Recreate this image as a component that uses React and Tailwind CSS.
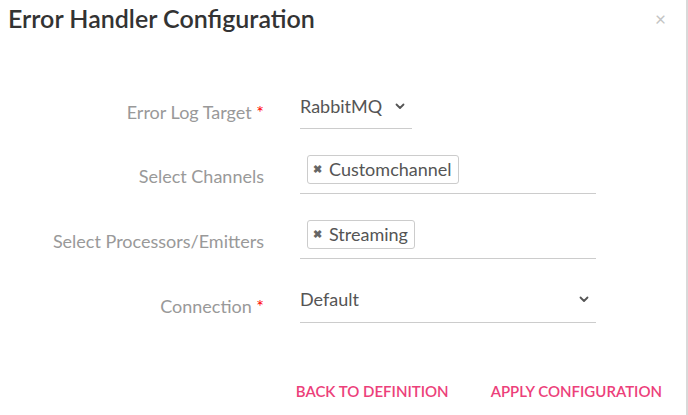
import React from "react";

const Chevron = ({ className }) => (
  <svg className={className} width="10" height="7" viewBox="0 0 10 7" fill="none">
    <path d="M1.5 1.5 L5 5 L8.5 1.5" stroke="#555" strokeWidth="1.8" strokeLinecap="round" strokeLinejoin="round" />
  </svg>
);

const Chip = ({ label }) => (
  <div className="flex h-[29px] items-center rounded-[3px] border border-[#cccccc] pl-[5px] pr-[6px] text-[18px] text-[#555]">
    <span className="mr-[7px] text-[11px] font-bold text-[#666]">✖</span>
    <span>{label}</span>
  </div>
);

export default function App() {
  return (
    <div
      className="relative h-[415px] w-[688px] overflow-hidden border-r-2 border-[#d9d9d9] bg-white"
      style={{ fontFamily: "Lato, 'Open Sans', sans-serif" }}
    >
      <div className="flex items-start justify-between pl-[8px] pr-[20px] pt-[2px]">
        <h1 className="text-[25px] leading-[32px] font-semibold text-[#333]">Error Handler Configuration</h1>
        <span className="mt-[8px] text-[19px] leading-[18px] text-[#c4c4c4]">×</span>
      </div>

      <div className="mt-[54px] flex flex-col">
        {/* Row 1 */}
        <div className="flex items-end">
          <div className="w-[264px] pb-[5px] text-right text-[18px] leading-[24px] text-[#999]">
            Error Log Target <span className="text-[#f00]">*</span>
          </div>
          <div className="ml-[36px] flex h-[41px] w-[112px] items-start border-b border-[#cccccc] pt-[6px]">
            <span className="text-[18px] leading-[24px] text-[#555]">RabbitMQ</span>
            <Chevron className="ml-[13px] mt-[9px]" />
          </div>
        </div>

        {/* Row 2 */}
        <div className="mt-[19px] flex items-end">
          <div className="w-[264px] pb-[6px] text-right text-[18px] leading-[24px] text-[#999]">
            Select Channels
          </div>
          <div className="ml-[36px] flex h-[46px] w-[296px] items-start border-b border-[#cccccc] pl-[7px] pt-[7px]">
            <Chip label="Customchannel" />
          </div>
        </div>

        {/* Row 3 */}
        <div className="mt-[19px] flex items-end">
          <div className="w-[264px] pb-[6px] text-right text-[18px] leading-[24px] text-[#999]">
            Select Processors/Emitters
          </div>
          <div className="ml-[36px] flex h-[46px] w-[296px] items-start border-b border-[#cccccc] pl-[7px] pt-[7px]">
            <Chip label="Streaming" />
          </div>
        </div>

        {/* Row 4 */}
        <div className="mt-[22px] flex items-end">
          <div className="w-[264px] pb-[5px] text-right text-[18px] leading-[24px] text-[#999]">
            Connection <span className="text-[#f00]">*</span>
          </div>
          <div className="ml-[36px] flex h-[42px] w-[296px] items-start justify-between border-b border-[#cccccc] pt-[6px] pr-[7px]">
            <span className="text-[18px] leading-[24px] text-[#555]">Default</span>
            <Chevron className="mt-[9px]" />
          </div>
        </div>
      </div>

      <div className="mt-[56px] flex justify-end gap-[26px] pr-[16px]">
        <button className="px-[8px] text-[15px] leading-[24px] font-semibold text-[#ec407a]">BACK TO DEFINITION</button>
        <button className="px-[8px] text-[15px] leading-[24px] font-semibold text-[#ec407a]">APPLY CONFIGURATION</button>
      </div>
    </div>
  );
}
